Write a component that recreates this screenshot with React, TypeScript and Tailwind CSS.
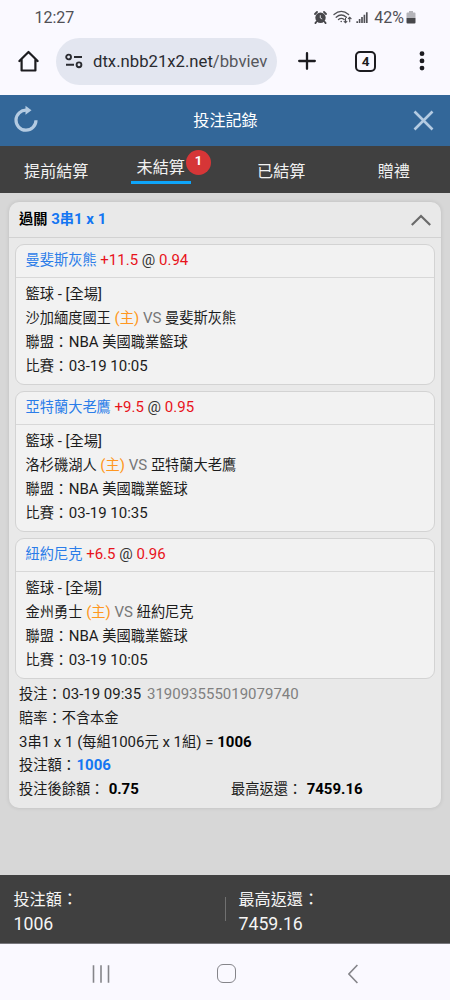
import type { ReactNode } from 'react';

interface Leg {
  pick: string;
  handicap: string;
  odds: string;
  home: string;
  away: string;
  time: string;
}

const legs: Leg[] = [
  { pick: '曼斐斯灰熊', handicap: '+11.5', odds: '0.94', home: '沙加緬度國王', away: '曼斐斯灰熊', time: '03-19 10:05' },
  { pick: '亞特蘭大老鷹', handicap: '+9.5', odds: '0.95', home: '洛杉磯湖人', away: '亞特蘭大老鷹', time: '03-19 10:35' },
  { pick: '紐約尼克', handicap: '+6.5', odds: '0.96', home: '金州勇士', away: '紐約尼克', time: '03-19 10:05' },
];

// Chinese glyphs are set slightly smaller than the latin text beside them
function Zh({ children }: { children: ReactNode }) {
  return <span className="text-[0.948em]">{children}</span>;
}

function StatusBar() {
  return (
    <div className="flex h-[34px] items-center justify-between pl-[34.5px] pr-[34px] pt-px text-[16px] text-[#505055]">
      <span>12:27</span>
      <div className="flex items-center">
        <svg className="mr-[6px]" width="13" height="13" viewBox="0 0 13 13">
          <circle cx="6.5" cy="6.7" r="5.2" fill="#47474b" />
          <path d="M1 3 3 1M12 3 10 1M2.4 10.8l-1 1.3M10.6 10.8l1 1.3" stroke="#47474b" strokeWidth="1.8" strokeLinecap="round" />
          <path d="M6.3 4.2v2.8l1.9 1" fill="none" stroke="#e4e4ea" strokeWidth="0.9" />
        </svg>
        <svg className="mr-[3px]" width="20" height="15" viewBox="0 0 20 15" fill="none" stroke="#505055" strokeWidth="1.3" strokeLinecap="round">
          <path d="M1 4.6q7.3-6.4 14.6 0M3.2 7.2q5.1-4.5 10.2 0M5.5 9.6q2.8-2.4 5.6 0" />
          <circle cx="8.2" cy="11.5" r=".8" fill="#505055" stroke="none" />
          <path d="M12.5 8.3v4.5m-1.4-1.4 1.4 1.4 1.4-1.4M16.7 11.8V7.3m-1.4 1.4 1.4-1.4 1.4 1.4" strokeWidth="1.1" />
        </svg>
        <svg className="mr-[6px]" width="12" height="13" viewBox="0 0 13 13" stroke="#505055" strokeWidth="1.8">
          <path d="M1.3 12.5v-2M3.9 12.5V8M6.5 12.5V6M9.1 12.5V3.5M11.7 12.5V.7" />
        </svg>
        <span>42%</span>
        <svg className="ml-[2px]" width="10" height="13" viewBox="0 0 10 13">
          <path d="M3 0h4v1.5h1.5q1 0 1 1V7H.5V2.5q0-1 1-1H3z" fill="#b4b4b9" />
          <path d="M.5 7h9v4.5q0 1-1 1h-7q-1 0-1-1z" fill="#47474b" />
        </svg>
      </div>
    </div>
  );
}

function BrowserBar() {
  return (
    <div className="flex h-[61px] items-center pb-[7px] text-[#1c1c20]">
      <svg className="ml-[18px] mr-[17px]" width="21" height="22" viewBox="0 0 21 22" fill="none" stroke="currentColor" strokeWidth="2.2" strokeLinejoin="round" strokeLinecap="round">
        <path d="M1.4 11 10.5 2l9.1 9M3.6 9v11.5h13.8V9" />
      </svg>
      <div className="flex h-[47px] w-[221px] items-center overflow-hidden rounded-full bg-[#e3e6f0] pl-[9px] text-[16.7px] text-[#55565c]">
        <svg className="mr-[10px] shrink-0" width="18" height="16" viewBox="0 0 18 16" fill="none" stroke="#2a2b30" strokeWidth="1.9">
          <circle cx="3.6" cy="4" r="2.4" />
          <path d="M9 4h8M1 11.8h8" />
          <circle cx="14" cy="11.8" r="2.4" />
        </svg>
        <span className="whitespace-nowrap pt-px">
          <span className="text-[#2a2b30]">dtx.nbb21x2.net</span>/bbviev
        </span>
      </div>
      <svg className="ml-[21px]" width="18" height="18" viewBox="0 0 18 18" stroke="currentColor" strokeWidth="2.3" strokeLinecap="round">
        <path d="M9 1.2v15.6M1.2 9h15.6" />
      </svg>
      <div className="ml-[39px] flex h-[21px] w-[21px] items-center justify-center rounded-[5px] border-2 border-current text-[13.5px] font-bold">4</div>
      <svg className="ml-[43px]" width="6" height="20" viewBox="0 0 6 20" fill="currentColor">
        <circle cx="3" cy="2.7" r="2.4" />
        <circle cx="3" cy="9.9" r="2.4" />
        <circle cx="3" cy="17.1" r="2.4" />
      </svg>
    </div>
  );
}

function LegCard({ leg }: { leg: Leg }) {
  return (
    <div className="h-[141px] rounded-[9px] border border-[#d3d3d3] bg-[#f2f2f2]">
      <div className="h-[33px] border-b border-[#d8d8d8] px-[9.5px] leading-[31px] text-[#333]">
        <span className="text-[#2b7de9]"><Zh>{leg.pick}</Zh></span>{' '}
        <span className="text-[#e8131b]">{leg.handicap}</span> @{' '}
        <span className="text-[#e8131b]">{leg.odds}</span>
      </div>
      <div className="px-[9.5px] pt-[4px] leading-[24px]">
        <div><Zh>籃球</Zh> - [<Zh>全場</Zh>]</div>
        <div>
          <Zh>{leg.home}</Zh> <span className="text-[#ff9720]">(<Zh>主</Zh>)</span>{' '}
          <span className="text-[#777]">VS</span> <Zh>{leg.away}</Zh>
        </div>
        <div><Zh>聯盟：</Zh><span className="ml-[0.6px]">NBA</span> <Zh>美國職業籃球</Zh></div>
        <div><Zh>比賽：</Zh><span className="ml-[0.6px]">{leg.time}</span></div>
      </div>
    </div>
  );
}

function BetCard() {
  return (
    <div className="mx-[9px] mt-[9px] h-[606px] rounded-[10px] bg-[#e9e9e9] text-[15px] text-[#1c1c1c] shadow-[0_0_4px_rgba(0,0,0,0.12)]">
      <div className="flex h-[36px] items-center justify-between border-b border-[#d2d2d2] pl-[10px] pr-[10px] font-bold text-black">
        <div><Zh>過關</Zh> <span className="text-[#1476f2]">3<Zh>串</Zh>1 x 1</span></div>
        <svg width="20" height="12" viewBox="0 0 20 12" fill="none" stroke="#6b6b6b" strokeWidth="2.2">
          <path d="M.8 11 10 2l9.2 9" />
        </svg>
      </div>
      <div className="flex flex-col gap-[6px] px-[6px] pt-[6px]">
        {legs.map((leg) => <LegCard key={leg.pick} leg={leg} />)}
      </div>
      <div className="px-[10px] pt-[4px] leading-[23.8px]">
        <div><Zh>投注：</Zh><span className="ml-[0.6px]">03-19 09:35</span> <span className="ml-[2px] text-[#808080]">319093555019079740</span></div>
        <div><Zh>賠率：不含本金</Zh></div>
        <div>3<Zh>串</Zh>1 x 1 (<Zh>每組</Zh>1006<Zh>元</Zh> x 1<Zh>組</Zh>) = <b className="text-black">1006</b></div>
        <div><Zh>投注額：</Zh><b className="ml-[0.6px] text-[#1476f2]">1006</b></div>
        <div className="flex">
          <div className="w-[212px]"><Zh>投注後餘額：</Zh> <b className="ml-[0.6px] text-black">0.75</b></div>
          <div><Zh>最高返還：</Zh> <b className="ml-[0.8px] text-black">7459.16</b></div>
        </div>
      </div>
    </div>
  );
}

export default function App() {
  return (
    <div lang="zh-Hant" className="flex h-[1000px] w-[450px] flex-col overflow-hidden bg-[#faf9ff] font-[Roboto,'Noto_Sans_CJK_TC',sans-serif]">
      <StatusBar />
      <BrowserBar />

      <header className="flex h-[51px] shrink-0 items-center justify-between bg-[#336799] pl-[14px] pr-[16px] text-[17px] text-white">
        <svg className="mb-[4px]" width="24" height="28" viewBox="0 0 24 28">
          <path d="M12.5 5.2A10 10 0 1 0 22 15.3" fill="none" stroke="#b4cbe2" strokeWidth="3.2" />
          <path d="M11.5.8v9l6-4.6z" fill="#b4cbe2" />
        </svg>
        <h1><Zh>投注記錄</Zh></h1>
        <svg width="21" height="21" viewBox="0 0 21 21" stroke="#b4cbe2" strokeWidth="2.6">
          <path d="m1.5 1.5 18 18M19.5 1.5l-18 18" />
        </svg>
      </header>

      <nav className="grid h-[47px] shrink-0 grid-cols-4 bg-[#404040] text-[17px] text-[#f2f2f2]">
        <div className="flex items-center justify-center pt-[5px]"><Zh>提前結算</Zh></div>
        <div className="relative flex justify-center pr-[16px] pt-[5px]">
          <div className="h-[33px] w-[60px] border-b-[3px] border-[#0ea5fa] text-center leading-[32px]"><Zh>未結算</Zh></div>
          <span className="absolute left-[73.5px] top-[3.5px] flex size-[25px] items-center justify-center rounded-full bg-[#d63637] pb-[2px] text-[13px] font-bold text-white">1</span>
        </div>
        <div className="flex items-center justify-center pt-[5px]"><Zh>已結算</Zh></div>
        <div className="flex items-center justify-center pt-[5px]"><Zh>贈禮</Zh></div>
      </nav>

      <main className="h-[682px] shrink-0 overflow-hidden bg-[#d7d7d7]">
        <BetCard />
      </main>

      <footer className="flex h-[69px] shrink-0 items-center border-b border-[#77777c] bg-[#404040] text-[17.7px] leading-[24px] text-[#f5f5f5]">
        <div className="w-[225px] pl-[13.5px] pt-[5px]">
          <div className="text-[17px]"><Zh>投注額：</Zh></div>
          <div>1006</div>
        </div>
        <div className="h-[24px] w-px bg-[#707070]" />
        <div className="pl-[12.5px] pt-[5px]">
          <div className="text-[17px]"><Zh>最高返還：</Zh></div>
          <div>7459.16</div>
        </div>
      </footer>

      <div className="flex flex-1 items-center pt-[3px] text-[#85858a]">
        <svg className="ml-[92px]" width="18" height="18" viewBox="0 0 18 18" stroke="currentColor" strokeWidth="1.6">
          <path d="M1.5.3v17.4M9 .3v17.4M16.5.3v17.4" />
        </svg>
        <div className="ml-[107px] h-[19px] w-[19px] rounded-[6px] border-[1.6px] border-current" />
        <svg className="ml-[112px]" width="10" height="20" viewBox="0 0 10 20" fill="none" stroke="currentColor" strokeWidth="1.6">
          <path d="M9.4 1 .9 10l8.5 9" />
        </svg>
      </div>
    </div>
  );
}
